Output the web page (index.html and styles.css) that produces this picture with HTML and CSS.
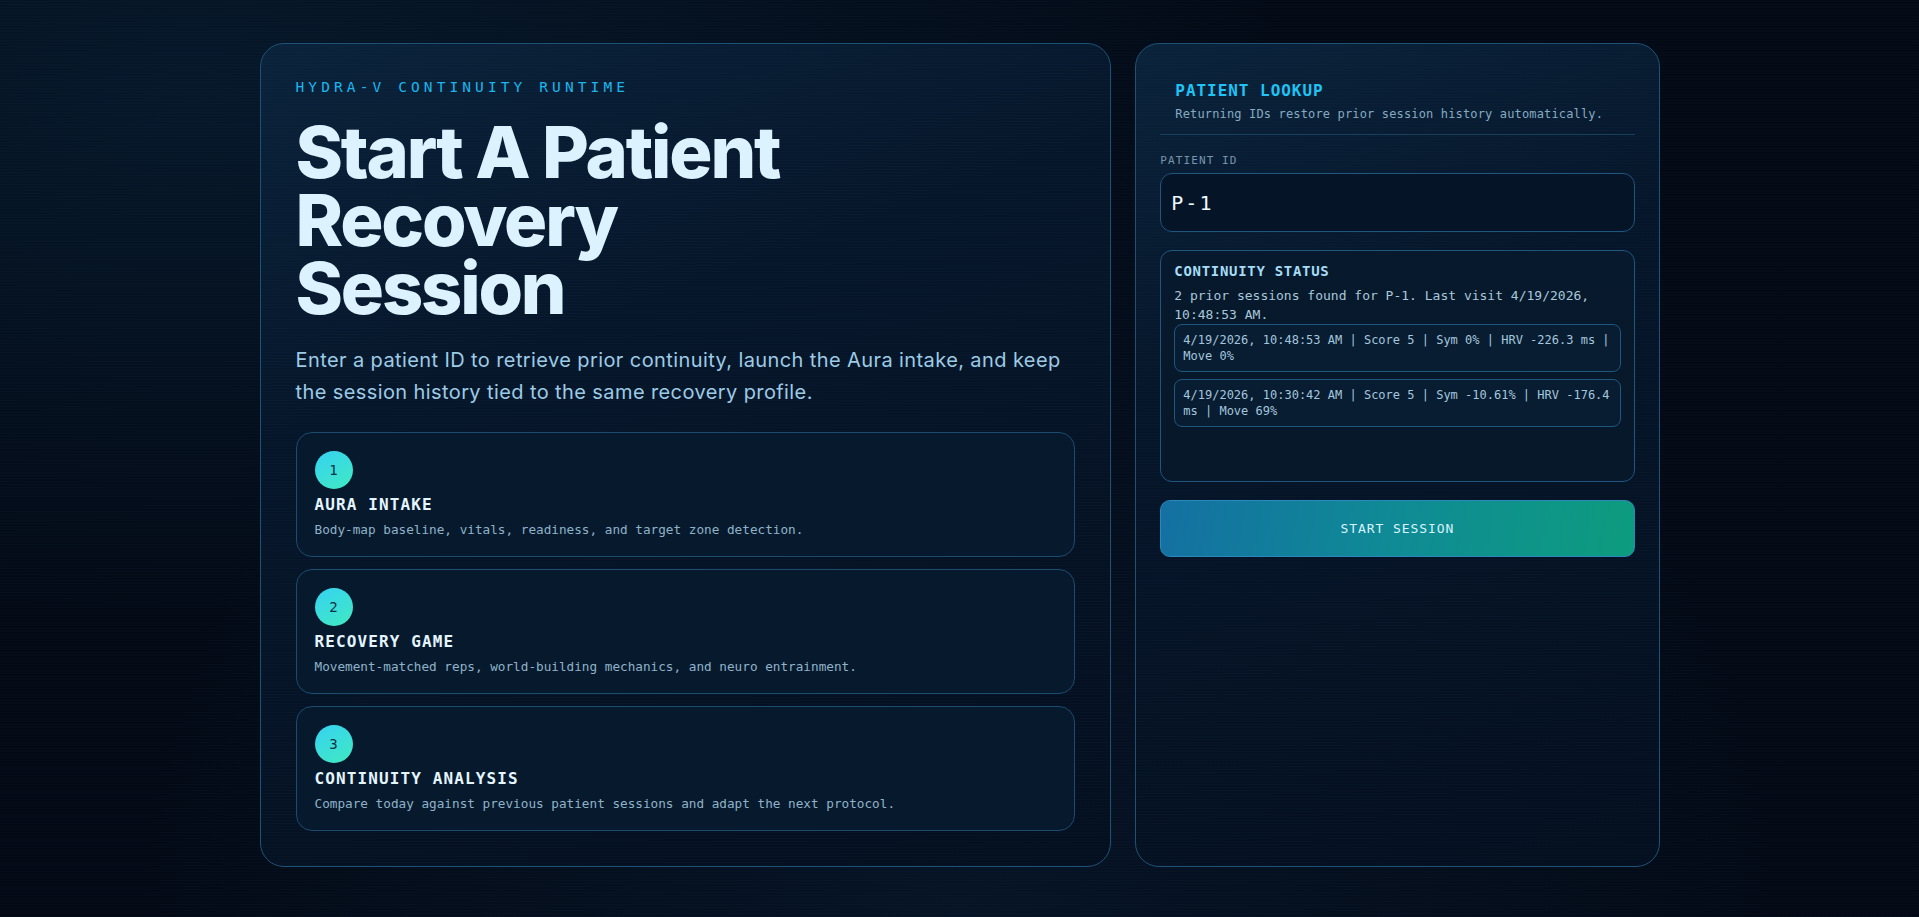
FILE: index.html
```html
<!DOCTYPE html>
<html lang="en">
<head>
<meta charset="utf-8">
<title>Hydra-V Continuity Runtime</title>
<link rel="stylesheet" href="styles.css">
</head>
<body>
<main class="layout">
  <section class="hero card">
    <div class="eyebrow">HYDRA-V CONTINUITY RUNTIME</div>
    <h1 class="title">Start A Patient Recovery Session</h1>
    <p class="lead">Enter a patient ID to retrieve prior continuity, launch the Aura intake, and keep the session history tied to the same recovery profile.</p>
    <div class="steps">
      <div class="step">
        <div class="step-num">1</div>
        <div class="step-title">AURA INTAKE</div>
        <div class="step-desc">Body-map baseline, vitals, readiness, and target zone detection.</div>
      </div>
      <div class="step">
        <div class="step-num">2</div>
        <div class="step-title">RECOVERY GAME</div>
        <div class="step-desc">Movement-matched reps, world-building mechanics, and neuro entrainment.</div>
      </div>
      <div class="step">
        <div class="step-num">3</div>
        <div class="step-title">CONTINUITY ANALYSIS</div>
        <div class="step-desc">Compare today against previous patient sessions and adapt the next protocol.</div>
      </div>
    </div>
  </section>

  <aside class="lookup card">
    <header class="lookup-head">
      <div class="lookup-title">PATIENT LOOKUP</div>
      <div class="lookup-sub">Returning IDs restore prior session history automatically.</div>
    </header>
    <label class="field-label" for="pid">PATIENT ID</label>
    <input class="field-input" id="pid" type="text" value="P-1">
    <div class="status">
      <div class="status-title">CONTINUITY STATUS</div>
      <div class="status-text">2 prior sessions found for P-1. Last visit 4/19/2026, 10:48:53 AM.</div>
      <div class="entries">
        <div class="entry">4/19/2026, 10:48:53 AM | Score 5 | Sym 0% | HRV -226.3 ms | Move 0%</div>
        <div class="entry">4/19/2026, 10:30:42 AM | Score 5 | Sym -10.61% | HRV -176.4 ms | Move 69%</div>
      </div>
    </div>
    <button class="start-btn" type="button">START SESSION</button>
  </aside>
</main>
</body>
</html>
```

FILE: styles.css
```css
* { box-sizing: border-box; }

html, body { margin: 0; padding: 0; }

body {
  min-height: 100vh;
  background:
    repeating-linear-gradient(0deg, rgba(120, 170, 220, 0.018) 0 1px, transparent 1px 3px),
    radial-gradient(ellipse at 10% 10%, #06182a 0%, transparent 45%),
    radial-gradient(ellipse at 50% 100%, #061426 0%, transparent 60%),
    #030a16;
  color: #dff3ff;
  font-family: "DejaVu Sans Mono", "Liberation Mono", monospace;
}

.layout {
  width: 1400px;
  margin: 0 auto;
  padding-top: 43px;
  display: grid;
  grid-template-columns: minmax(0, 1.625fr) minmax(0, 1fr);
  gap: 24px;
  align-items: stretch;
}

.card {
  border: 1px solid #1c5278;
  border-radius: 24px;
  background:
    repeating-linear-gradient(0deg, rgba(120, 180, 230, 0.02) 0 1px, transparent 1px 3px),
    linear-gradient(160deg, #0a233b 0%, #06162a 35%, #040f1f 100%);
}

/* ---------- left ---------- */
.hero {
  padding: 35px;
  display: flex;
  flex-direction: column;
}

.eyebrow {
  font-size: 14.5px;
  line-height: 17px;
  letter-spacing: 4.1px;
  color: #1cb6ee;
}

.title {
  margin: 22px 0 0;
  width: 520px;
  font-family: Inter, "Noto Sans", sans-serif;
  font-weight: 800;
  font-size: 72px;
  line-height: 68px;
  letter-spacing: -0.03em;
  color: #dcf2ff;
}

.lead {
  margin: 22px 0 0;
  max-width: 780px;
  font-family: Inter, "Noto Sans", sans-serif;
  font-size: 20px;
  line-height: 32px;
  letter-spacing: 0.4px;
  color: #9dcbe6;
}

.steps {
  margin-top: 24px;
  display: flex;
  flex-direction: column;
  gap: 12px;
}

.step {
  border: 1px solid #1b4b6e;
  border-radius: 16px;
  padding: 18px 18px 17px;
  background: #071a2d;
  display: flex;
  flex-direction: column;
  align-items: flex-start;
}

.step-num {
  width: 38px;
  height: 38px;
  border-radius: 50%;
  background: linear-gradient(150deg, #36d2f3 0%, #40eac0 100%);
  color: #0d3346;
  font-size: 14px;
  display: flex;
  align-items: center;
  justify-content: center;
}

.step-title {
  margin-top: 6px;
  font-size: 16px;
  line-height: 20px;
  font-weight: bold;
  letter-spacing: 0.07em;
  color: #e4f5ff;
}

.step-desc {
  margin-top: 6px;
  font-size: 12.7px;
  line-height: 18px;
  color: #8fb2c9;
}

/* ---------- right ---------- */
.lookup {
  padding: 24px;
  display: flex;
  flex-direction: column;
}

.lookup-head {
  padding: 13px 15px 12px;
  border-bottom: 1px solid #163f5e;
}

.lookup-title {
  font-size: 16px;
  line-height: 20px;
  font-weight: bold;
  letter-spacing: 0.06em;
  color: #1fc3f5;
}

.lookup-sub {
  margin-top: 5px;
  font-size: 12px;
  line-height: 16px;
  letter-spacing: 0.15px;
  color: #86aac2;
}

.field-label {
  margin-top: 19px;
  font-size: 11px;
  line-height: 14px;
  letter-spacing: 0.1em;
  color: #7895ab;
}

.field-input {
  margin-top: 5px;
  height: 59px;
  width: 100%;
  border: 1px solid #1f5680;
  border-radius: 12px;
  background: #051426;
  color: #eef8ff;
  font-family: "DejaVu Sans Mono", "Liberation Mono", monospace;
  font-size: 20px;
  letter-spacing: 0.1em;
  padding: 0 10px;
  outline: none;
}

.status {
  margin-top: 18px;
  min-height: 232px;
  border: 1px solid #1f5680;
  border-radius: 12px;
  padding: 11px 13px;
  background: linear-gradient(180deg, #07192c 0%, #061829 100%);
}

.status-title {
  font-size: 14px;
  line-height: 18px;
  font-weight: bold;
  letter-spacing: 0.05em;
  color: #a6dcf6;
}

.status-text {
  margin-top: 6px;
  font-size: 13px;
  line-height: 19px;
  color: #a8c8dc;
}

.entries {
  display: flex;
  flex-direction: column;
  gap: 7px;
}

.entry {
  border: 1px solid #1f5680;
  border-radius: 8px;
  padding: 7px 8px;
  font-size: 12px;
  line-height: 16px;
  color: #a4c6de;
  background: #081d31;
}

.start-btn {
  margin-top: 18px;
  height: 57px;
  width: 100%;
  border: 1px solid #2a88bb;
  border-radius: 10px;
  background: linear-gradient(100deg, #1470a2 0%, #0f8b95 50%, #0d9c7e 100%);
  color: #d8f3ff;
  font-family: "DejaVu Sans Mono", "Liberation Mono", monospace;
  font-size: 13px;
  letter-spacing: 0.07em;
  cursor: pointer;
}
```
